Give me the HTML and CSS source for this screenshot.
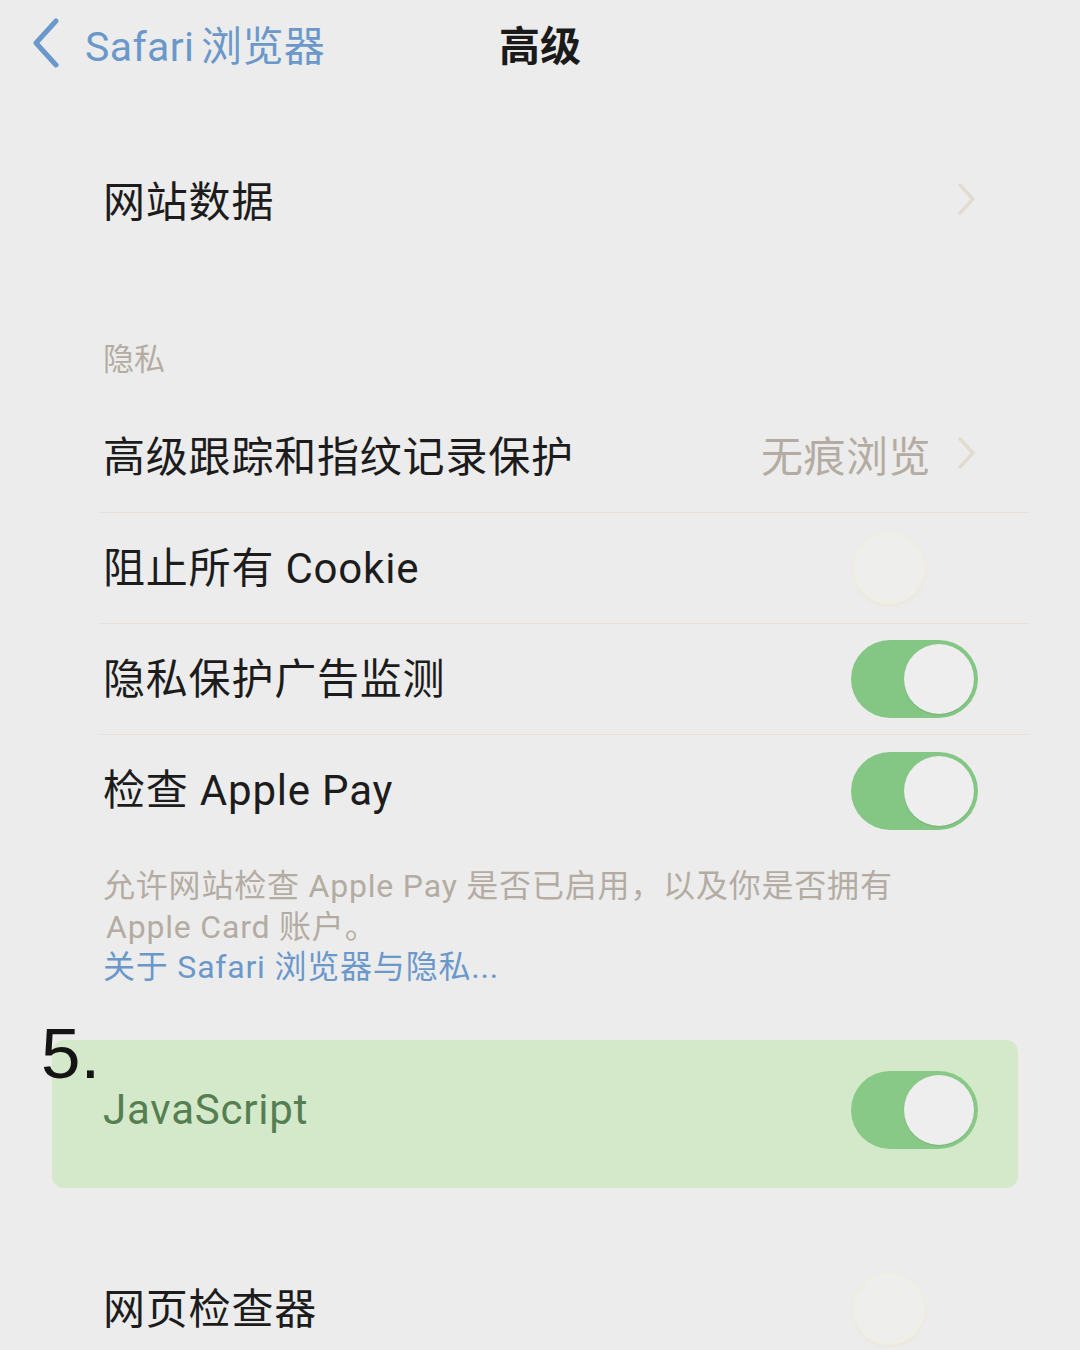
FILE: index.html
```html
<!DOCTYPE html>
<html lang="zh-CN">
<head>
<meta charset="utf-8">
<title>高级</title>
<link rel="stylesheet" href="styles.css">
</head>
<body>
<div class="screen">
  <header class="nav">
    <div class="back">
      <svg class="back-icon" width="34" height="50" viewBox="0 0 34 50"><path d="M27 3 L7 25 L27 47" fill="none" stroke="#6a98cb" stroke-width="5" stroke-linecap="round" stroke-linejoin="round"/></svg>
      <span class="back-text">Safari 浏览器</span>
    </div>
    <div class="title">高级</div>
    <div></div>
  </header>

  <section class="group first">
    <div class="row last">
      <span class="label">网站数据</span>
      <span class="trail"><svg class="chev" width="20" height="34" viewBox="0 0 20 34"><path d="M3 3 L16 17 L3 31" fill="none" stroke="#e2dbd0" stroke-width="3.5" stroke-linecap="round" stroke-linejoin="round"/></svg></span>
    </div>
  </section>

  <div class="section-head">隐私</div>
  <section class="group">
    <div class="row">
      <span class="label">高级跟踪和指纹记录保护</span>
      <span class="trail"><span class="value">无痕浏览</span><svg class="chev" width="20" height="34" viewBox="0 0 20 34"><path d="M3 3 L16 17 L3 31" fill="none" stroke="#e2dbd0" stroke-width="3.5" stroke-linecap="round" stroke-linejoin="round"/></svg></span>
    </div>
    <div class="row">
      <span class="label">阻止所有 Cookie</span>
      <span class="toggle off"><span class="knob"></span></span>
    </div>
    <div class="row">
      <span class="label">隐私保护广告监测</span>
      <span class="toggle on"><span class="knob"></span></span>
    </div>
    <div class="row last">
      <span class="label">检查 Apple Pay</span>
      <span class="toggle on"><span class="knob"></span></span>
    </div>
  </section>
  <div class="footnote">
    <div>允许网站检查 Apple Pay 是否已启用，以及你是否拥有</div>
    <div class="indent">Apple Card 账户。</div>
    <div class="link">关于 Safari 浏览器与隐私...</div>
  </div>

  <section class="highlight">
    <span class="step">5.</span>
    <div class="hl-row">
      <span class="label js">JavaScript</span>
      <span class="toggle on hl"><span class="knob"></span></span>
    </div>
  </section>

  <section class="group inspector">
    <div class="row last">
      <span class="label">网页检查器</span>
      <span class="toggle off"><span class="knob"></span></span>
    </div>
  </section>
</div>
</body>
</html>
```

FILE: styles.css
```css
* { box-sizing: border-box; }
html, body {
  margin: 0;
  padding: 0;
  background: #ececec;
}
body {
  font-family: Roboto, "Noto Sans CJK SC", sans-serif;
  color: #1c1c1c;
  width: 1080px;
  height: 1350px;
  overflow: hidden;
}
.screen {
  display: flex;
  flex-direction: column;
}

.nav {
  height: 84px;
  margin-top: 1px;
  display: grid;
  grid-template-columns: 1fr auto 1fr;
  align-items: center;
}
.back {
  display: flex;
  align-items: center;
  padding-left: 29px;
  color: #6a98cb;
  font-size: 41px;
}
.back-icon { margin-right: 22px; }
.back-text { letter-spacing: 0.4px; word-spacing: -4px; }
.title {
  font-size: 41px;
  font-weight: 700;
  color: #1a1a1a;
}

.group {
  margin-left: 100px;
  margin-right: 52px;
  display: flex;
  flex-direction: column;
}
.group.first { margin-top: 62px; }

.row {
  height: 111px;
  display: flex;
  align-items: center;
  justify-content: space-between;
  padding-left: 3px;
  padding-right: 50px;
  padding-bottom: 8px;
  border-bottom: 1px solid #e8e0d6;
}
.row.last { border-bottom: none; }

.label {
  font-size: 42px;
  letter-spacing: 0.8px;
}
.trail {
  display: flex;
  align-items: center;
}
.value {
  font-size: 42px;
  color: #b4aca3;
  margin-right: 26px;
  letter-spacing: 0.5px;
}
.chev { display: block; margin-right: 1px; }

.section-head {
  padding: 82px 0 22px 103px;
  font-size: 31px;
  line-height: 40px;
  color: #b4aca3;
}

.footnote {
  padding: 20px 0 0 103px;
  font-size: 32px;
  line-height: 40.5px;
  letter-spacing: 0.8px;
  color: #b4aca3;
}
.footnote .indent { padding-left: 3px; }
.footnote .link { color: #6a98cb; }

.toggle {
  position: relative;
  width: 127px;
  height: 78px;
  border-radius: 39px;
  flex: none;
  margin-top: 8px;
}
.toggle.on { background: #84c785; }
.toggle .knob {
  position: absolute;
  top: 4px;
  width: 70px;
  height: 70px;
  border-radius: 50%;
  background: #eeeeee;
}
.toggle.on .knob { right: 4px; box-shadow: 0 1px 1px rgba(60, 120, 60, 0.25); }
.toggle.off .knob {
  left: 2px;
  top: 3px;
  width: 72px;
  height: 72px;
  background: #eeeeec;
  border: 2px solid #f0efe2;
  box-shadow: 0 2px 3px rgba(230, 225, 190, 0.35);
}

.highlight {
  position: relative;
  margin: 52px 62px 0 52px;
  height: 148px;
  border-radius: 12px;
  background: #d4e9c9;
  display: flex;
  align-items: center;
  padding-bottom: 8px;
}
.step {
  position: absolute;
  top: -21px;
  left: -11px;
  font-family: "Liberation Sans", Arial, sans-serif;
  font-size: 71px;
  line-height: 70px;
  color: #141414;
}
.hl-row {
  flex: 1;
  display: flex;
  align-items: center;
  justify-content: space-between;
  padding-left: 51px;
  padding-right: 40px;
}
.hl-row .toggle { margin-top: 0; }
.label.js { color: #557f52; }
.toggle.hl { background: #89c987; }

.inspector { margin-top: 66px; }
```
